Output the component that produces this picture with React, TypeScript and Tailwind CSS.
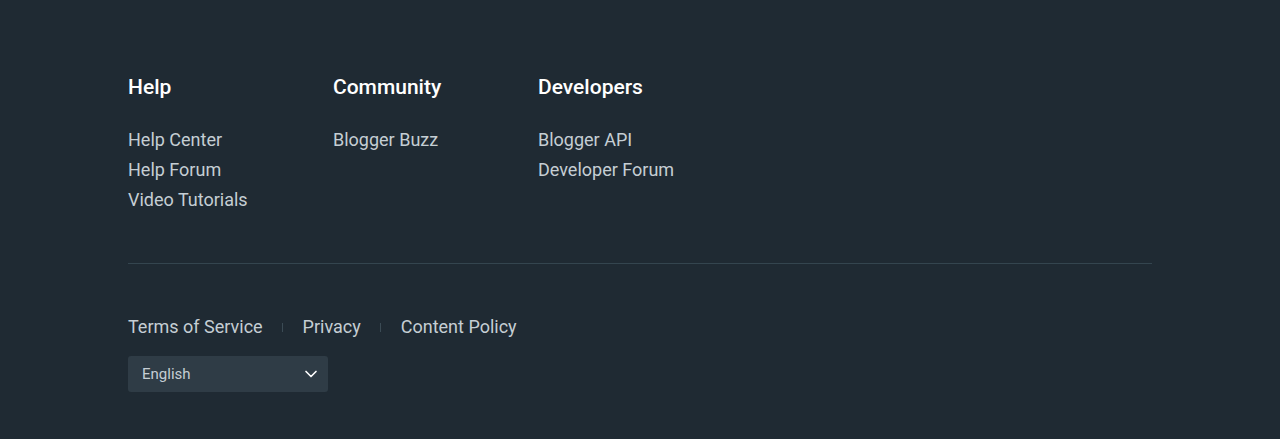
import { ChevronDown } from "lucide-react";

const columns = [
  { title: "Help", links: ["Help Center", "Help Forum", "Video Tutorials"] },
  { title: "Community", links: ["Blogger Buzz"] },
  { title: "Developers", links: ["Blogger API", "Developer Forum"] },
];

const legal = ["Terms of Service", "Privacy", "Content Policy"];

export default function App() {
  return (
    <footer
      className="min-h-[439px] w-full bg-[#1f2a33] text-[#c5ced4]"
      style={{ fontFamily: "Roboto, 'Noto Sans', sans-serif" }}
    >
      <div className="mx-auto w-[1024px] pt-[73px]">
        {/* Link columns */}
        <div className="flex">
          {columns.map((col) => (
            <div key={col.title} className="w-[205px]">
              <h3 className="text-[21px] leading-[28px] font-medium text-white">
                {col.title}
              </h3>
              <ul className="mt-6">
                {col.links.map((l) => (
                  <li key={l} className="text-[18px] leading-[30px]">
                    <a href="#">{l}</a>
                  </li>
                ))}
              </ul>
            </div>
          ))}
        </div>

        <div className="mt-12 h-px bg-[#34454f]" />

        {/* Legal links */}
        <div className="mt-12 flex items-center text-[18px] leading-[30px]">
          {legal.map((l, i) => (
            <div key={l} className="flex items-center">
              {i > 0 && <span className="ml-[19px] mr-[20px] h-[9px] w-px bg-[#3b4b55]" />}
              <a href="#">{l}</a>
            </div>
          ))}
        </div>

        {/* Language select */}
        <div className="mt-[14px] flex h-9 w-[200px] items-center justify-between rounded-[3px] bg-[#2f3c46] pl-[14px] pr-[7px]">
          <span className="text-[15px] text-[#c5ced4]">English</span>
          <ChevronDown className="h-5 w-5 text-white" strokeWidth={2} />
        </div>
      </div>
    </footer>
  );
}
